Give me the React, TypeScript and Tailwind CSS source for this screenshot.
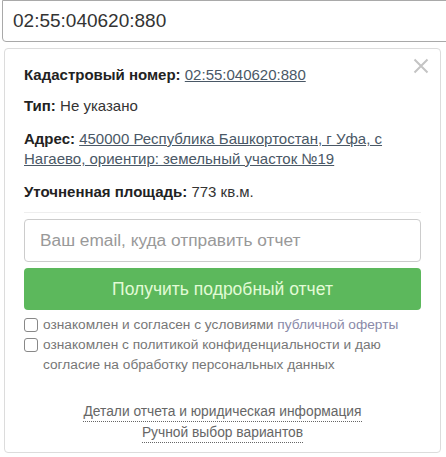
import React from "react";

export default function App() {
  return (
    <div className="w-[446px] h-[457px] bg-white overflow-hidden relative" style={{ fontFamily: '"Liberation Sans", Arial, sans-serif' }}>
      <div className="ml-[2px] w-[460px] h-[42px] border border-[#a9a9a9] rounded-b-[4px] flex items-center pl-[10px] text-[19px] text-[#333]">
        02:55:040620:880
      </div>
      <div className="mt-[6px] ml-[4px] w-[437px] h-[405px] border border-[#dcdcdc] rounded-[4px] bg-white relative px-[19px] pt-[16px]">
        <button className="absolute right-[10px] top-[8px] w-[18px] h-[18px] flex items-center justify-center">
          <svg width="16" height="16" viewBox="0 0 16 16">
            <path d="M1.5 1.5 L14.5 14.5 M14.5 1.5 L1.5 14.5" stroke="#c4c4c4" strokeWidth="2" />
          </svg>
        </button>
        <div className="text-[15px] text-[#333] leading-[20px]">
          <div><b className="text-[#222]">Кадастровый номер:</b> <a className="underline text-[#4a5866]">02:55:040620:880</a></div>
          <div className="mt-[11px]"><b className="text-[#222]">Тип:</b> Не указано</div>
          <div className="mt-[13px] pr-[10px]"><b className="text-[#222]">Адрес:</b> <a className="underline text-[#4a5866]">450000 Республика Башкортостан, г Уфа, с Нагаево, ориентир: земельный участок №19</a></div>
          <div className="mt-[13px]"><b className="text-[#222]">Уточненная площадь:</b> 773 кв.м.</div>
        </div>
        <div className="mt-[10px] h-px bg-[#eee]" />
        <div className="mt-[6px] h-[43px] border border-[#ccc] rounded-[4px] flex items-center pl-[15px] text-[17.3px] text-[#999]">
          Ваш email, куда отправить отчет
        </div>
        <div className="mt-[6px] h-[42px] rounded-[4px] bg-[#5cb85c] flex items-center justify-center text-[17.5px] text-[#e2fbd6]">
          Получить подробный отчет
        </div>
        <div className="mt-[5px] text-[13.7px] text-[#777] leading-[20px]">
          <div className="flex items-start">
            <span className="mt-[3px] w-[14px] h-[14px] border border-[#888] rounded-[3px] shrink-0" />
            <span className="ml-[5px]">ознакомлен и согласен с условиями <span className="text-[#8a8aa8]">публичной оферты</span></span>
          </div>
          <div className="flex items-start">
            <span className="mt-[3px] w-[14px] h-[14px] border border-[#888] rounded-[3px] shrink-0" />
            <span className="ml-[5px]">ознакомлен с политикой конфиденциальности и даю согласие на обработку персональных данных</span>
          </div>
        </div>
        <div className="mt-[28px] flex flex-col items-center text-[13.8px] text-[#666] leading-[22px]">
          <a className="border-b border-dotted border-[#666] leading-[18px]">Детали отчета и юридическая информация</a>
          <a className="mt-[2px] border-b border-dotted border-[#666] leading-[18px]">Ручной выбор вариантов</a>
        </div>
      </div>
    </div>
  );
}
